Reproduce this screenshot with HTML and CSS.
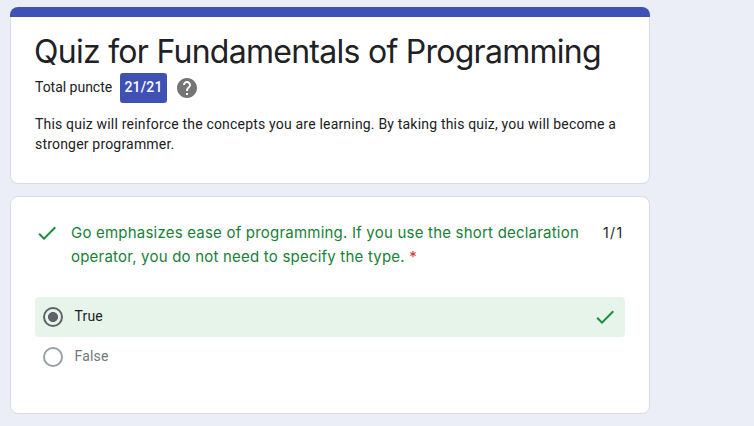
FILE: index.html
```html
<!DOCTYPE html>
<html lang="en">
<head>
<meta charset="utf-8">
<title>Quiz for Fundamentals of Programming</title>
<link rel="stylesheet" href="styles.css">
</head>
<body>
<main class="form">
  <header class="card intro">
    <h1 class="title">Quiz for Fundamentals of Programming</h1>
    <div class="score">
      <span class="score-label">Total puncte</span>
      <span class="score-badge">21/21</span>
      <svg class="help" viewBox="0 0 24 24"><path d="M12 2C6.48 2 2 6.48 2 12s4.48 10 10 10 10-4.48 10-10S17.52 2 12 2zm1 17h-2v-2h2v2zm2.070-7.750l-.9.920C13.450 12.900 13 13.500 13 15h-2v-.5c0-1.100.450-2.100 1.170-2.830l1.240-1.260c.370-.360.590-.860.590-1.410 0-1.100-.9-2-2-2s-2 .9-2 2H8c0-2.210 1.790-4 4-4s4 1.790 4 4c0 .880-.360 1.680-.930 2.250z"/></svg>
    </div>
    <p class="description">This quiz will reinforce the concepts you are learning. By taking this quiz, you will become a<br>stronger programmer.</p>
  </header>
  <section class="card question">
    <div class="heading">
      <svg class="check" viewBox="0 0 24 24"><path d="M9 16.170L4.830 12l-1.420 1.410L9 19 21 7l-1.410-1.410z"/></svg>
      <h2 class="prompt"><span class="line-one">Go emphasizes ease of programming. If you use the short declaration</span><br><span class="line-two">operator, you do not need to specify the type.</span> <span class="required">*</span></h2>
      <span class="points">1/1</span>
    </div>
    <div class="option selected">
      <span class="radio"></span>
      <span class="label">True</span>
      <svg class="check" viewBox="0 0 24 24"><path d="M9 16.170L4.830 12l-1.420 1.410L9 19 21 7l-1.410-1.410z"/></svg>
    </div>
    <div class="option">
      <span class="radio"></span>
      <span class="label">False</span>
    </div>
  </section>
</main>
</body>
</html>
```
FILE: styles.css
```css
* { box-sizing: border-box; }
body {
  margin: 0;
  height: 426px;
  overflow: hidden;
  background: #ebeef7;
  color: #202124;
  font-family: Roboto, sans-serif;
  font-size: 14px;
  letter-spacing: 0.19px;
}
.form {
  width: 640px;
  margin: 7px 0 0 10px;
  display: flex;
  flex-direction: column;
  gap: 12px;
}
.card {
  background: #fff;
  border: 1px solid #dadce0;
  border-radius: 8px;
  padding: 0 24px;
  overflow: hidden;
}
.intro {
  height: 177px;
  border-color: transparent;
  border-top: 0;
  background:
    linear-gradient(#3f51b5, #3f51b5) top / 100% 10px no-repeat border-box,
    linear-gradient(#fff, #fff) padding-box,
    linear-gradient(#dadce0, #dadce0) border-box;
  padding-top: 25px;
}
.title {
  margin: 0 0 0 -1px;
  font: 400 32px/40px Inter, sans-serif;
  letter-spacing: -0.73px;
  white-space: nowrap;
}
.score {
  display: flex;
  align-items: center;
  height: 30px;
  margin-top: 1px;
}
.score-label { width: 77px; line-height: 20px; margin-top: -2px; letter-spacing: -0.02px; white-space: nowrap; }
.score-badge {
  width: 47px;
  height: 30px;
  margin-left: 8px;
  border-radius: 3px;
  background: #3f51b5;
  color: #fff;
  font-weight: 500;
  line-height: 29px;
  text-align: center;
}
.help { width: 24px; height: 24px; margin-left: 8px; fill: #757575; }
.description { margin: 11px 0 0; line-height: 20px; white-space: nowrap; }
.question { height: 218px; padding-top: 24px; }
.heading { display: flex; height: 76px; }
.check { width: 24px; height: 24px; fill: #1e8e3e; flex: none; }
.prompt {
  width: 532px;
  margin: 0 0 0 12px;
  color: #188038;
  font: 400 15px/24px Inter, sans-serif;
  letter-spacing: 0.21px;
  white-space: nowrap;
}
.required { color: #d93025; }
.points { font: 400 14px/24px Inter, sans-serif; letter-spacing: 1.4px; }
.option {
  display: flex;
  align-items: center;
  height: 40px;
  padding: 0 8px;
  border-radius: 4px;
  color: #70757a;
}
.selected { background: #e6f4ea; color: #202124; }
.radio {
  width: 20px;
  height: 20px;
  border: 2px solid #9aa0a6;
  border-radius: 50%;
}
.selected .radio {
  border-color: #5f6368;
  background: radial-gradient(circle, #5f6368 4.7px, transparent 5.3px);
}
.label { flex: 1; margin: -2px 0 0 11.5px; }
```
